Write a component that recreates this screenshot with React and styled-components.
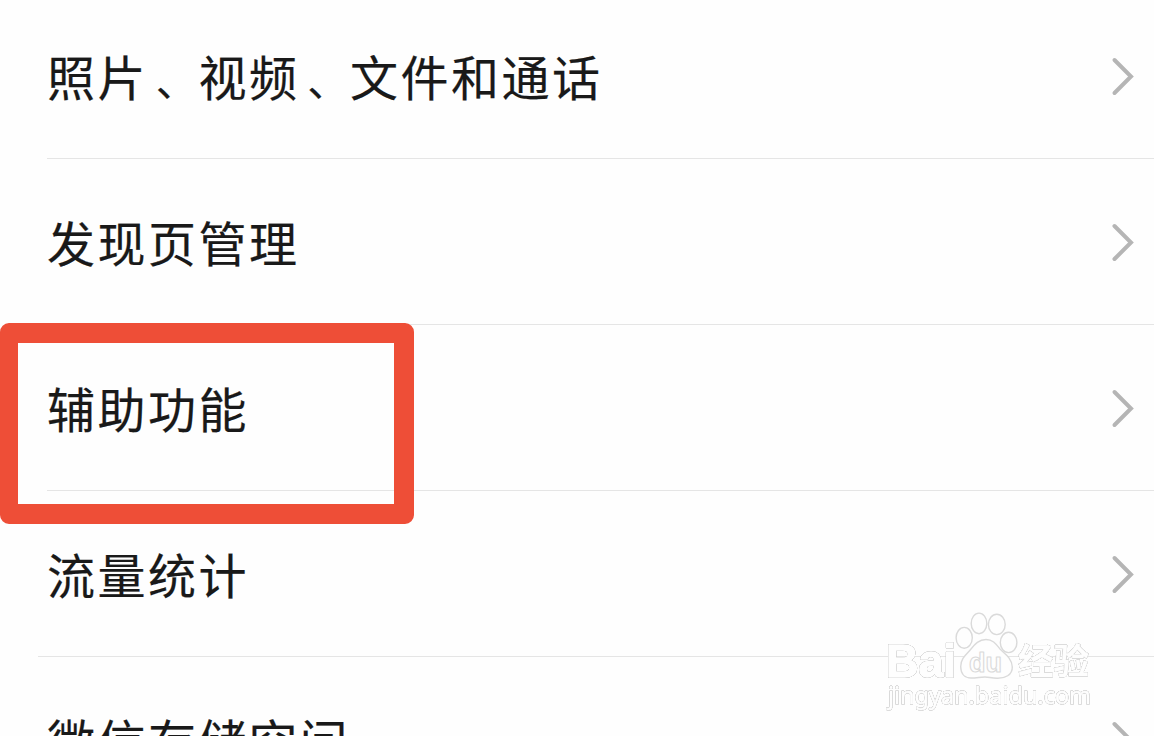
import React from "react";
import styled, { createGlobalStyle } from "styled-components";

const GlobalStyle = createGlobalStyle`
  * {
    box-sizing: border-box;
  }
  body {
    margin: 0;
    background-color: #fefefe;
    font-family: "Noto Sans CJK SC", sans-serif;
  }
`;
const Container = styled.div`
  position: relative;
  width: 100%;
  height: 736px;
  overflow: hidden;
  background-color: #fefefe;
`;
const List = styled.div`
  display: flex;
  flex-direction: column;
  margin-top: -7px;
`;
const Row = styled.div`
  flex-shrink: 0;
  height: 166px;
  margin-left: ${(props) => props.$inset || 47}px;
  padding-left: ${(props) => 47 - (props.$inset || 47)}px;
  padding-right: 19px;
  border-bottom: 1px solid #e5e5e5;
  display: flex;
  align-items: center;
  justify-content: space-between;
`;
const Label = styled.div`
  color: #191919;
  font-size: 48px;
  line-height: 72px;
  letter-spacing: 2.5px;
  white-space: nowrap;
  margin-top: -1px;
  -webkit-text-stroke: 0.2px #191919;
`;
const Comma = styled.span`
  margin-left: 8px;
  font-size: 40px;
  line-height: 1;
`;
const Arrow = styled.svg`
  width: 24px;
  height: 42px;
  flex-shrink: 0;
  margin-top: 2px;
`;
const Highlight = styled.div`
  position: absolute;
  left: 0;
  top: 323px;
  width: 414px;
  height: 201px;
  border: 20px solid #ee4e37;
  border-left-width: 18px;
  border-radius: 9px;
`;
const Watermark = styled.svg`
  position: absolute;
  left: 870px;
  top: 600px;
  width: 240px;
  height: 125px;
`;
const MarkText = styled.text`
  font-family: ${(props) => props.$font || '"Liberation Sans"'}, sans-serif;
  font-size: ${(props) => props.$size}px;
  font-weight: ${(props) => props.$weight || 400};
  fill: #fefefe;
  stroke: #fefefe;
  stroke-width: ${(props) => props.$outline || 0}px;
  filter: drop-shadow(0 0 0.6px #a0a0a0) drop-shadow(0 0 0.5px #c4c4c4);
`;

const items = [
  { text: "照片、视频、文件和通话" },
  { text: "发现页管理" },
  { text: "辅助功能" },
  { text: "流量统计", inset: 38 },
  { text: "微信存储空间" },
];

const Chevron = () => (
  <Arrow viewBox="0 0 24 42" fill="none">
    <path
      d="M3.5 4 L20 20.5 L3.5 37"
      stroke="#b5b5b5"
      strokeWidth="4"
      strokeLinecap="round"
      strokeLinejoin="miter"
    />
  </Arrow>
);

const BaiduMark = () => (
  <Watermark
    viewBox="0 0 240 125"
    fill="#fefefe"
    stroke="#dadada"
    strokeWidth="1.4"
    strokeLinejoin="round"
  >
    <MarkText
      x="16"
      y="76.5"
      $size="46"
      $weight="700"
      $outline="1.5"
      textLength="70"
      lengthAdjust="spacingAndGlyphs"
    >
      Bai
    </MarkText>
    <MarkText
      x="148"
      y="74"
      $size="35"
      $weight="700"
      $outline="0.6"
      $font='"Noto Sans CJK SC"'
      textLength="71"
      lengthAdjust="spacingAndGlyphs"
    >
      经验
    </MarkText>
    <MarkText
      x="18"
      y="104"
      $size="24"
      $outline="0.8"
      $font='"Noto Sans"'
      textLength="203"
      lengthAdjust="spacingAndGlyphs"
    >
      jingyan.baidu.com
    </MarkText>
    <ellipse cx="94.2" cy="37.8" rx="8.1" ry="10.4" />
    <ellipse cx="109" cy="23.4" rx="7.8" ry="10.3" />
    <ellipse cx="126.8" cy="24.4" rx="8.4" ry="10.2" />
    <ellipse cx="138.6" cy="42.4" rx="8.3" ry="10.2" />
    <path d="M116 39.5 C123 39.5 126 44 130 49 C134 53 142 58 142.3 67 C142.5 75 135 78.5 127 78.3 C121 78.1 119 77 115 77 C110 77 107 78 101 78 C95 78 90.7 74 90.7 66.5 C90.7 58 97 54 101 49 C105 44 109 39.5 116 39.5 Z" />
    <text
      x="99"
      y="71.5"
      fontSize="27"
      fontWeight="700"
      strokeWidth="1.1"
      fontFamily="Liberation Sans, sans-serif"
      textLength="33"
      lengthAdjust="spacingAndGlyphs"
    >
      du
    </text>
  </Watermark>
);

const App = () => {
  return (
    <>
      <GlobalStyle />
      <Container>
        <List>
          {items.map((item) => (
            <Row key={item.text} $inset={item.inset}>
              <Label>
                {item.text
                  .split(/(、)/)
                  .map((part, i) =>
                    part === "、" ? <Comma key={i}>{part}</Comma> : part
                  )}
              </Label>
              <Chevron />
            </Row>
          ))}
        </List>
        <Highlight />
        <BaiduMark />
      </Container>
    </>
  );
};

export default App;
